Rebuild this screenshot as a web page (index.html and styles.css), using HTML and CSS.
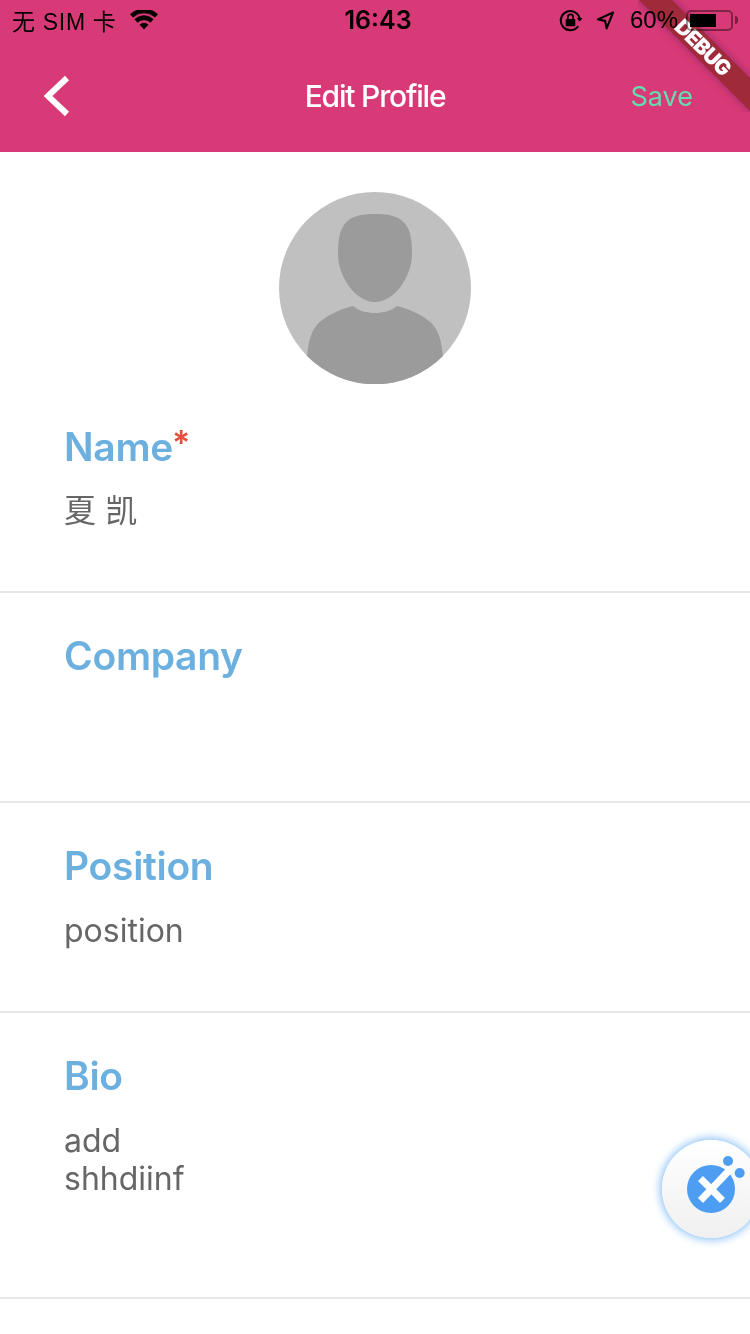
FILE: index.html
```html
<!DOCTYPE html>
<html lang="en">
<head>
<meta charset="utf-8">
<title>Edit Profile</title>
<link rel="stylesheet" href="styles.css">
</head>
<body>
<div class="screen">
  <header class="header">
    <div class="status">
      <div class="status-left">
        <span class="carrier">无 SIM 卡</span>
        <svg class="wifi" width="28" height="20" viewBox="0 0 30 22"><path d="M15 21 10.600 16.200a6.400 6.400 0 0 1 8.800 0ZM7.900 13.400 5 10.200a14.600 14.600 0 0 1 20 0l-2.900 3.200a10.400 10.400 0 0 0-14.200 0ZM2.900 7.900 0 4.800a22 22 0 0 1 30 0l-2.900 3.100a17.800 17.800 0 0 0-24.200 0Z"/></svg>
      </div>
      <span class="time">16:43</span>
      <div class="status-right">
        <svg class="lock" width="23" height="23" viewBox="0 0 24 24"><path class="line" d="M21.500 9.500A10 10 0 1 0 20 18"/><path d="M18.500 9.500h6l-3 3.500Z"/><rect x="7" y="10.500" width="10" height="7.500" rx="1"/><path class="line thin" d="M9.200 10.500V8.500a2.800 2.800 0 0 1 5.600 0v2"/></svg>
        <svg class="arrow" width="19" height="19" viewBox="0 0 20 20"><path class="line" d="M18 1.500 2 8.800l7.600 1.600 1.600 7.900Z"/></svg>
        <span class="percent">60%</span>
        <div class="battery"><div class="battery-fill"></div></div>
        <div class="battery-cap"></div>
      </div>
    </div>
    <nav class="nav">
      <svg class="back" width="28" height="42" viewBox="0 0 28 42"><path d="M25 3 6 21l19 18"/></svg>
      <h1 class="title">Edit Profile</h1>
      <span class="save">Save</span>
    </nav>
    <div class="banner"><div class="banner-band">DEBUG</div></div>
  </header>

  <main class="content">
    <div class="avatar-wrap">
      <svg class="avatar" width="192" height="192" viewBox="0 0 192 192">
        <circle cx="96" cy="96" r="96" fill="#c0c0c0"/>
        <path class="avatar-fg" d="M96 22C110 22 121 24 127 33 132 40 133 50 133 62 133 85 115 110 96 110 77 110 59 85 59 62 59 50 60 40 65 33 71 24 82 22 96 22Z"/>
        <path class="avatar-fg" d="M28 164C30 146 33 136 42 129 50 122 65 116 74 114 80 119 88 121 96 121 104 121 112 119 118 114 127 116 142 122 150 129 159 136 162 146 164 164A96 96 0 0 1 28 164Z"/>
      </svg>
    </div>
    <section class="field field-name">
      <div class="label">Name<span class="req">*</span></div>
      <div class="value cjk">夏 凯</div>
    </section>
    <section class="field">
      <div class="label">Company</div>
    </section>
    <section class="field">
      <div class="label">Position</div>
      <div class="value">position</div>
    </section>
    <section class="field field-bio">
      <div class="label">Bio</div>
      <div class="value">add<br>shhdiinf</div>
    </section>
  </main>

  <div class="fab">
    <svg width="70" height="70" viewBox="-9 0 70 70">
      <circle cx="26" cy="35" r="24" fill="#4d9df2"/>
      <circle cx="43" cy="7" r="5" fill="#4d9df2"/>
      <circle cx="54.700" cy="19" r="5" fill="#4d9df2"/>
      <path class="fab-mark" d="M15.500 24.500 37.500 46.500M15.500 46.500 46 14.500"/>
    </svg>
  </div>
</div>
</body>
</html>
```

FILE: styles.css
```css
* { box-sizing: border-box; }
html, body { margin: 0; padding: 0; background: #fff; }
.screen {
  position: relative;
  width: 750px;
  height: 1334px;
  overflow: hidden;
  font-family: Inter, "Noto Sans CJK SC", sans-serif;
}
.header { background: #d83a77; height: 152px; position: relative; will-change: transform; }
.content { will-change: transform; }
.status {
  position: relative;
  z-index: 2;
  height: 40px;
  display: flex;
  align-items: center;
  justify-content: space-between;
  padding: 0 12px;
  color: #000;
}
.status-left { display: flex; align-items: center; gap: 13px; width: 256px; }
.carrier { font-size: 23px; font-family: "Liberation Sans", "Noto Sans CJK SC", sans-serif; letter-spacing: 0.7px; }
.wifi { stroke: #000; stroke-width: 0.8; }
.time { font-size: 25px; font-weight: 600; }
.status-right { display: flex; align-items: center; width: 250px; justify-content: flex-end; }
.lock { margin-right: 14px; }
.arrow { margin-right: 15px; }
.percent { font-size: 24px; font-family: "Liberation Sans", sans-serif; margin-right: 8px; }
.line { fill: none; stroke: #000; stroke-width: 2.2; stroke-linejoin: round; }
.thin { stroke-width: 1.8; }
.battery {
  width: 47px;
  height: 21px;
  border: 2px solid rgba(0,0,0,.4);
  border-radius: 5px;
  padding: 2px;
}
.battery-fill { width: 26px; height: 100%; background: #000; }
.battery-cap {
  width: 3px;
  height: 8px;
  margin-left: 2px;
  background: rgba(0,0,0,.45);
  border-radius: 0 3px 3px 0;
}
.nav {
  height: 112px;
  display: grid;
  grid-template-columns: 1fr auto 1fr;
  align-items: center;
  padding: 0 42px;
}
.back { fill: none; stroke: #fff; stroke-width: 6; }
.title {
  margin: 0;
  font-size: 30px;
  font-weight: 500;
  color: #fff;
  letter-spacing: -1.2px;
  text-align: center;
}
.save { font-size: 27px; color: #64dcb0; justify-self: end; margin-right: 15px; }
.avatar-wrap { display: flex; justify-content: center; padding-top: 40px; height: 232px; }
.avatar { display: block; }
.avatar-fg { fill: #9b9b9b; }
.field {
  height: 210px;
  padding: 40px 64px 0;
  border-bottom: 2px solid #e8e8e8;
}
.field-name { height: 209px; }
.field-bio { height: 286px; }
.label { font-size: 39px; line-height: 46px; font-weight: 600; color: #6cb0e0; letter-spacing: -0.3px; }
.req { color: #e74c3c; font-size: 34px; vertical-align: 6px; line-height: 0; margin-left: -1px; }
.value { font-size: 32px; line-height: 38px; color: #666; margin-top: 23px; }
.cjk { font-family: "Noto Sans CJK SC", sans-serif; font-weight: 400; word-spacing: 2px; margin-top: 19px; }
.banner {
  position: absolute;
  top: 0;
  right: 0;
  width: 112px;
  height: 112px;
  overflow: hidden;
}
.banner-band {
  position: absolute;
  left: -35px;
  top: 36px;
  width: 200px;
  height: 23px;
  line-height: 23px;
  transform: rotate(45deg);
  background: #9e2a3a;
  box-shadow: 0 0 8px rgba(60,20,80,.45);
  color: #fff;
  text-align: center;
  font-size: 21px;
  font-weight: 900;
  letter-spacing: -0.8px;
}
.fab {
  position: absolute;
  left: 662px;
  top: 1140px;
  width: 98px;
  height: 98px;
  border-radius: 50%;
  background: linear-gradient(#fff, #f0f0f0);
  box-shadow: 0 0 8px 2px #8dc2f7;
  display: flex;
  align-items: center;
  justify-content: center;
}
.fab-mark { fill: none; stroke: #fff; stroke-width: 7; }
```
